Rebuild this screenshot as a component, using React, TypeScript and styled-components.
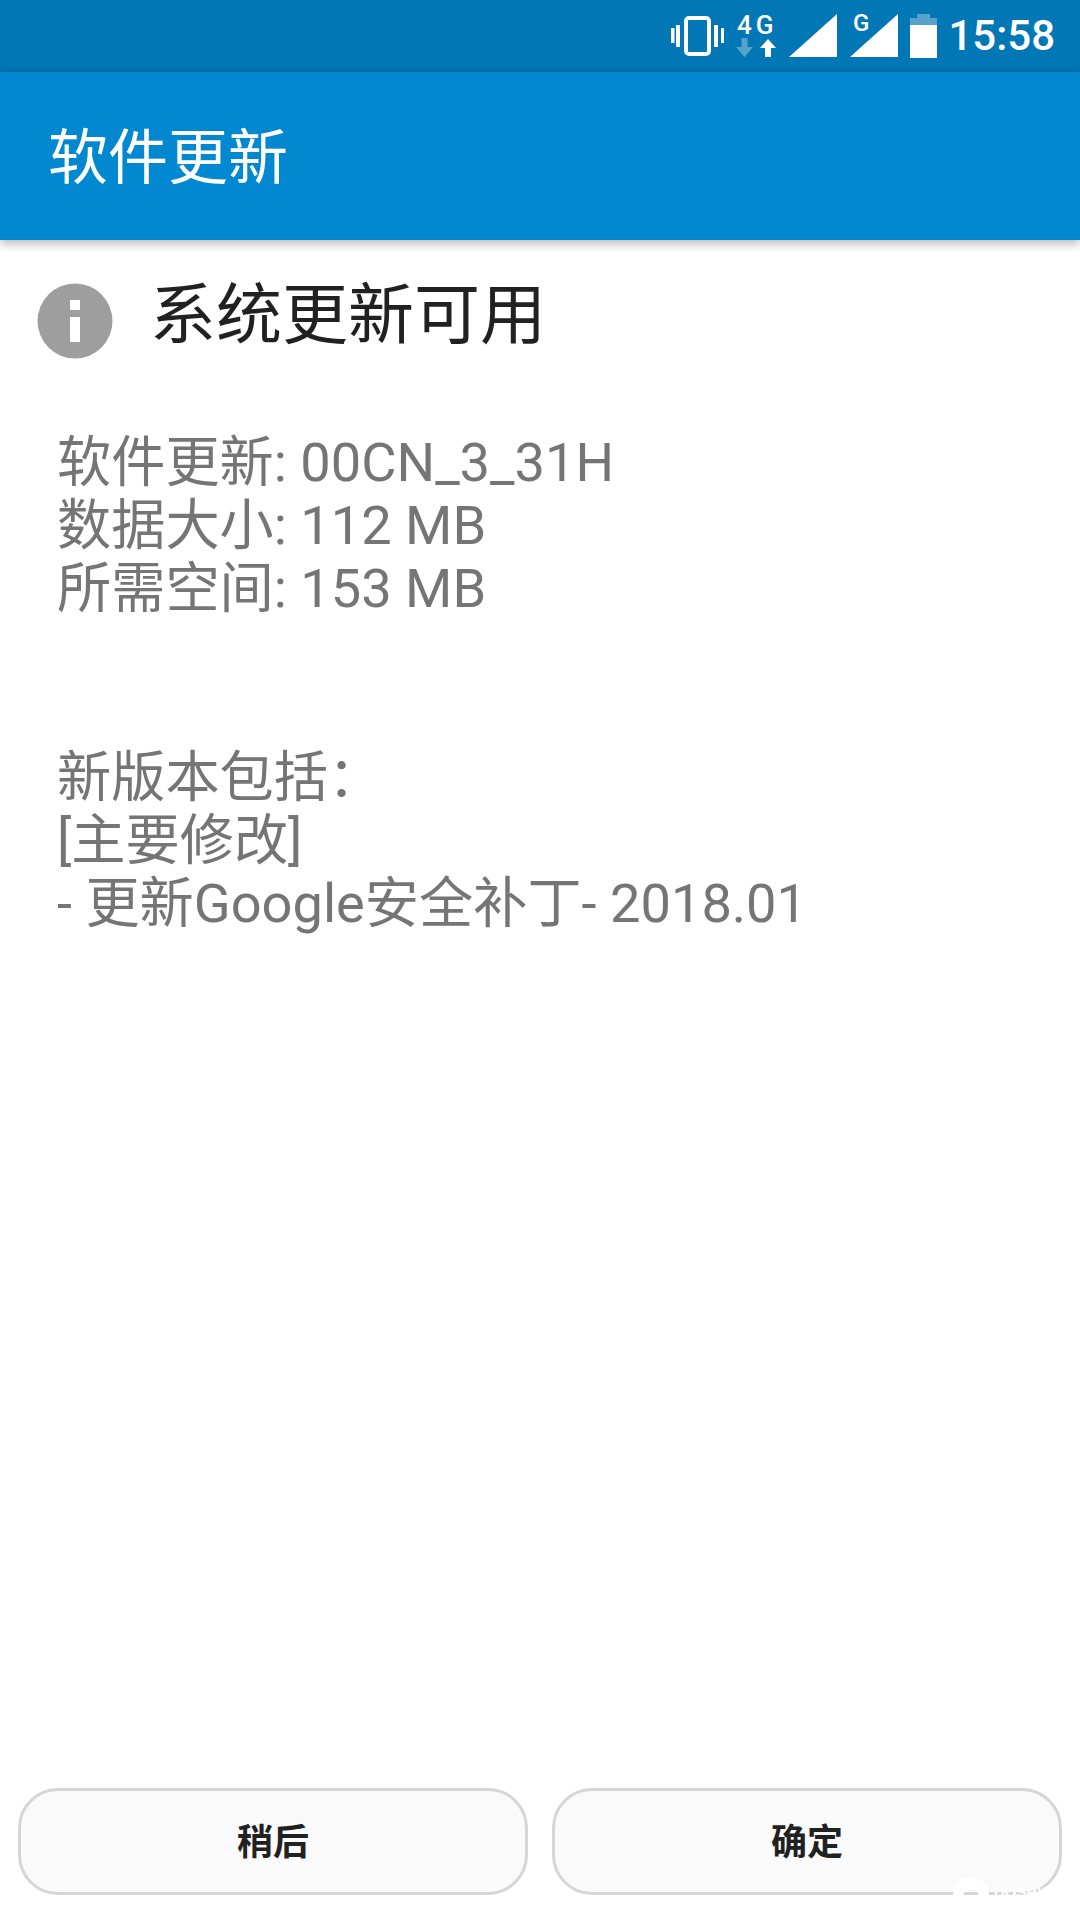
import React from 'react';
import styled, { createGlobalStyle } from 'styled-components';

const FONT = `Roboto, "Noto Sans CJK SC", sans-serif`;

const GlobalStyle = createGlobalStyle`
    html, body {
        margin: 0;
        padding: 0;
        background: #fff;
    }
    * {
        box-sizing: border-box;
    }
`;

const Screen = styled.div`
    position: relative;
    width: 1080px;
    height: 1920px;
    display: flex;
    flex-direction: column;
    overflow: hidden;
    background: #fff;
    font-family: ${FONT};
`;

const StatusBar = styled.div`
    height: 72px;
    flex: none;
    display: flex;
    align-items: center;
    justify-content: flex-end;
    padding-right: 25px;
    background: #0277b5;
    color: #fff;
`;

const StatusIcon = styled.svg<{ $gap?: number }>`
    display: block;
    flex: none;
    overflow: visible;
    margin-right: ${({ $gap }) => $gap ?? 0}px;
`;

const Clock = styled.span`
    font-size: 42px;
    font-weight: 500;
    line-height: 72px;
    margin-left: 11px;
`;

const AppBar = styled.header`
    position: relative;
    z-index: 1;
    height: 168px;
    flex: none;
    display: flex;
    align-items: center;
    padding: 0 0 8px 48px;
    background: #0288d1;
    box-shadow: 0 3px 10px rgba(0, 0, 0, 0.32);
    color: #fff;
    font-size: 60px;
`;

const Content = styled.main`
    flex: 1;
    min-height: 0;
    display: flex;
    flex-direction: column;
`;

const TitleRow = styled.div`
    display: flex;
    align-items: flex-start;
    gap: 37px;
    height: 118px;
    padding: 36px 0 0 37px;
`;

const InfoIcon = styled.svg`
    display: block;
    flex: none;
    margin-top: 7px;
`;

const DialogTitle = styled.h1`
    margin: 0;
    font-size: 66px;
    font-weight: 400;
    line-height: 80px;
    color: #212121;
`;

const Message = styled.div`
    padding: 73px 0 0 57px;
    font-size: 54.2px;
    line-height: 63px;
    color: #757575;
`;

const Line = styled.div`
    white-space: nowrap;
`;

const Spacer = styled.div`
    height: 126px;
`;

const ButtonBar = styled.div`
    flex: none;
    display: grid;
    grid-template-columns: 1fr 1fr;
    gap: 24px;
    padding: 0 18px 25px;
`;

const ActionButton = styled.button`
    height: 107px;
    border: 3px solid #d6d6d6;
    border-radius: 40px;
    background: #fafafa;
    color: #212121;
    font-family: ${FONT};
    font-size: 36px;
    font-weight: 700;
    padding: 0 0 5px;
`;

const Watermark = styled.div`
    position: absolute;
    left: 953px;
    top: 1877px;
    display: flex;
    align-items: flex-start;
    gap: 5px;
    color: #fff;
`;

const WatermarkText = styled.span`
    font-family: "Liberation Sans", sans-serif;
    font-size: 15px;
    font-weight: 700;
    line-height: 18px;
    margin-top: 6px;
`;

const App: React.FC = () => (
    <Screen>
        <GlobalStyle />
        <StatusBar>
            {/* vibrate */}
            <StatusIcon $gap={12} width="53" height="44" viewBox="0 0 53 44">
                <rect x="15" y="4" width="23" height="36" rx="3" fill="none" stroke="#fff" strokeWidth="4" />
                <path d="M0 14h3.5v15H0zM5 11h4v22H5zM43 11h4v22h-4zM50 14h3v15h-3z" fill="#fff" />
            </StatusIcon>
            <StatusIcon $gap={13} width="40" height="44" viewBox="0 0 40 44">
                <text x="1" y="20" fill="#fff" fontFamily="Roboto, sans-serif" fontSize="26" fontWeight="500" letterSpacing="4">4G</text>
                <path d="M5.5 24h6v9H17l-8.500 10L0 33h5.500z" fill="#fff" opacity="0.33" />
                <path d="M29 43v-9h-5l8-9 8 9h-5v9z" fill="#fff" />
            </StatusIcon>
            <StatusIcon $gap={13} width="48" height="44" viewBox="0 0 48 44">
                <path d="M48 0v43H0z" fill="#fff" />
            </StatusIcon>
            <StatusIcon $gap={12} width="48" height="44" viewBox="0 0 48 44">
                <path d="M48 0v43H0z" fill="#fff" />
                <text x="3" y="17" fill="#fff" fontFamily="Roboto, sans-serif" fontSize="24" fontWeight="500">G</text>
            </StatusIcon>
            <StatusIcon width="27" height="44" viewBox="0 0 27 44">
                <path d="M7 0h13v4h7v7H0V4h7z" fill="#fff" opacity="0.33" />
                <path d="M0 11h27v33H0z" fill="#fff" />
            </StatusIcon>
            <Clock>15:58</Clock>
        </StatusBar>
        <AppBar>软件更新</AppBar>
        <Content>
            <TitleRow>
                <InfoIcon width="76" height="76" viewBox="0 0 76 76">
                    <circle cx="38" cy="38" r="37.500" fill="#9e9e9e" />
                    <path d="M33 17h10v10H33zM33 34h10v25H33z" fill="#fff" />
                </InfoIcon>
                <DialogTitle>系统更新可用</DialogTitle>
            </TitleRow>
            <Message>
                <Line>软件更新: 00CN_3_31H</Line>
                <Line>数据大小: 112 MB</Line>
                <Line>所需空间: 153 MB</Line>
                <Spacer />
                <Line>新版本包括：</Line>
                <Line>[主要修改]</Line>
                <Line>- 更新Google安全补丁- 2018.01</Line>
            </Message>
        </Content>
        <ButtonBar>
            <ActionButton>稍后</ActionButton>
            <ActionButton>确定</ActionButton>
        </ButtonBar>
        <Watermark>
            <svg width="36" height="36" viewBox="0 0 36 36">
                <path d="M0 18a18 18 0 0 1 36 0v18H26V20a8 8 0 0 0-16 0v16H0z" fill="#fff" />
            </svg>
            <WatermarkText>DOSPY</WatermarkText>
        </Watermark>
    </Screen>
);

export default App;
